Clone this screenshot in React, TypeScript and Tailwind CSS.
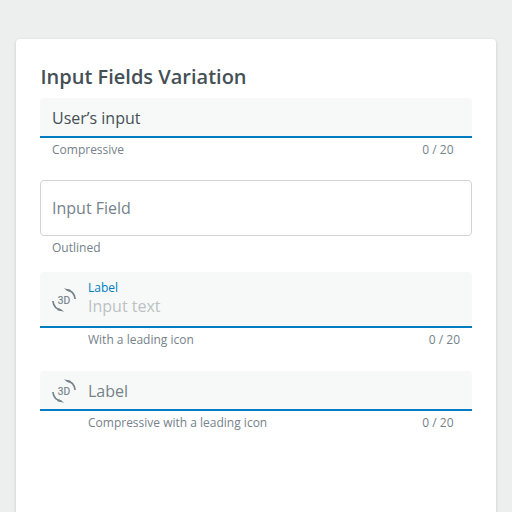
import type { ReactNode } from "react";

function RotationIcon() {
  return (
    <svg viewBox="0 0 24 24" className="relative top-px size-6 shrink-0 text-[#75828a]" aria-hidden="true">
      <g fill="none" stroke="currentColor" strokeWidth="1.7">
        <path d="M14.5 1.7C19.2 2.6 22.6 6.3 23.1 11" />
        <path d="M9.5 22.3C4.8 21.4 1.4 17.7.9 13" />
      </g>
      <path fill="currentColor" d="M11.5.2 18.6 1.8 17.4 4Z" />
      <path fill="currentColor" d="M12.5 23.8 5.4 22.2 6.6 20Z" />
      <text x="12" y="16" textAnchor="middle" fill="currentColor" stroke="currentColor" strokeWidth="0.2" textLength="12.4" lengthAdjust="spacingAndGlyphs" className="font-['Roboto',sans-serif] text-[11px] font-normal">3D</text>
    </svg>
  );
}

function Helper({ text, count, className = "" }: { text: string; count?: string; className?: string }) {
  return (
    <div className={`flex h-6 items-center justify-between text-[12px] leading-6 text-[#75828a] ${className}`}>
      <span>{text}</span>
      {count && <span>{count}</span>}
    </div>
  );
}

function Filled({ children, className = "" }: { children: ReactNode; className?: string }) {
  return (
    <div className={`flex items-center rounded-t border-b-2 border-[#007cc2] bg-[#f7f9f8] px-3 text-[16px] leading-6 ${className}`}>
      {children}
    </div>
  );
}

export default function App() {
  return (
    <div className="h-[512px] overflow-hidden bg-[#edefee] px-4 pt-[39px] font-['Open_Sans',sans-serif]">
      <main className="h-[520px] rounded bg-white px-6 pt-6 shadow-[0_1px_3px_rgba(60,75,85,0.25)]">
        <h1 className="h-[35px] pl-[0.5px] text-[20px] leading-7 font-semibold text-[#455056]">Input Fields Variation</h1>

        <Filled className="h-10 pt-0.5 text-[#455056]">User’s input</Filled>
        <Helper text="Compressive" count="0 / 20" className="pr-[18.5px] pl-3" />

        <div className="mt-[18px] flex h-14 items-center rounded border border-[#d0d4d6] px-[11px] text-[16px] text-[#75828a]">
          Input Field
        </div>
        <Helper text="Outlined" className="pl-3" />

        <Filled className="mt-3 h-14 gap-3">
          <RotationIcon />
          <div className="flex flex-col">
            <span className="text-[12px] leading-4 text-[#007cc2]">Label</span>
            <span className="-mt-px mb-px leading-[22px] text-[#bcc2c4]">Input text</span>
          </div>
        </Filled>
        <Helper text="With a leading icon" count="0 / 20" className="pr-3 pl-12" />

        <Filled className="mt-[19px] h-10 gap-3 text-[#75828a]">
          <RotationIcon />
          <span className="pt-0.5">Label</span>
        </Filled>
        <Helper text="Compressive with a leading icon" count="0 / 20" className="pr-[18.5px] pl-12" />
      </main>
    </div>
  );
}
